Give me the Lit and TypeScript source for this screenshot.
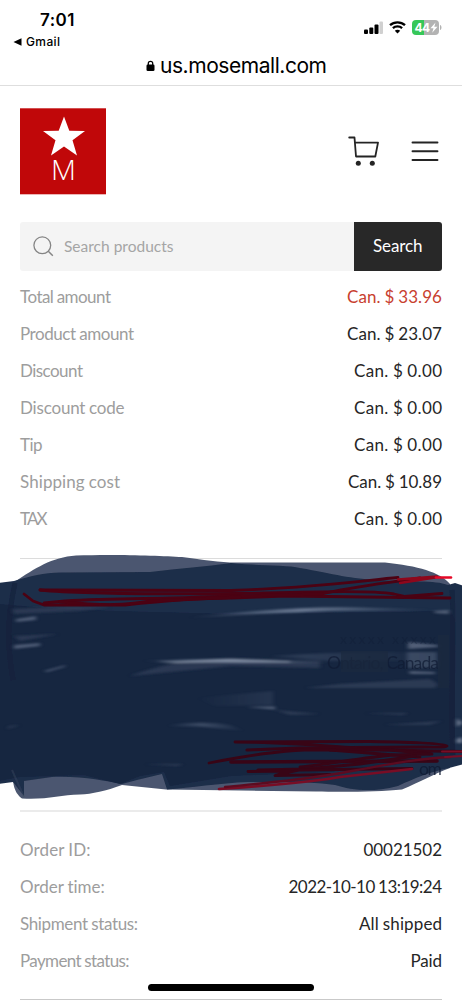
import { LitElement, html, css, svg } from "lit";
import { customElement, property } from "lit/decorators.js";

/** Text tracked so that it fills a given width exactly. */
@customElement("fit-text")
class FitText extends LitElement {
  @property({ type: String }) text = "";
  @property({ type: Number }) size = 0;

  static styles = css`
    :host { display: inline-block; white-space: pre; }
    .t { display: inline-block; white-space: pre; }
  `;

  render() {
    return html`<span class="t">${this.text}</span>`;
  }

  updated() {
    const el = this.renderRoot.querySelector(".t") as HTMLElement;
    if (!this.size || !el) return;
    el.style.letterSpacing = "0px";
    const gap = (this.size - el.getBoundingClientRect().width) / Math.max(1, this.text.length - 1);
    el.style.letterSpacing = `${gap.toFixed(3)}px`;
    el.style.marginRight = `${(-gap).toFixed(3)}px`;
  }
}

type Row = { label: string; lw: number; value: string; vw: number; hot?: boolean };

const amounts: Row[] = [
  { label: "Total amount", lw: 91, value: "Can. $ 33.96", vw: 95, hot: true },
  { label: "Product amount", lw: 114, value: "Can. $ 23.07", vw: 95 },
  { label: "Discount", lw: 63, value: "Can. $ 0.00", vw: 88 },
  { label: "Discount code", lw: 104.5, value: "Can. $ 0.00", vw: 88 },
  { label: "Tip", lw: 22.5, value: "Can. $ 0.00", vw: 88 },
  { label: "Shipping cost", lw: 100, value: "Can. $ 10.89", vw: 94 },
  { label: "TAX", lw: 27.5, value: "Can. $ 0.00", vw: 88 },
];

const order: Row[] = [
  { label: "Order ID:", lw: 70.5, value: "00021502", vw: 78.5 },
  { label: "Order time:", lw: 85, value: "2022-10-10 13:19:24", vw: 153.5 },
  { label: "Shipment status:", lw: 118, value: "All shipped", vw: 83 },
  { label: "Payment status:", lw: 109.5, value: "Paid", vw: 31.5 },
];

const scribble = svg`
  <defs>
    <filter id="soft" x="-5%" y="-5%" width="110%" height="110%"><feGaussianBlur stdDeviation="0.7"/></filter>
    <filter id="haze" x="-20%" y="-80%" width="140%" height="260%"><feGaussianBlur stdDeviation="2.2 0.9"/></filter>
    <linearGradient id="fade" x1="0" x2="1"><stop offset="0" stop-color="#8290a8" stop-opacity="0"/><stop offset=".45" stop-color="#8290a8"/><stop offset="1" stop-color="#8290a8" stop-opacity="0"/></linearGradient>
  </defs>
  <g filter="url(#soft)">
    <path fill="#4c576f" d="M16 581C34 569 52 557 76 555.500C110 554 160 555.500 182 557C205 560 222 563 240 562.500L385 562.500C418 566 440 572 450 584L452 640L450 768C434 774 420 782 402 789.500C380 792 340 792 316 791.500L166 789.500L122 785C106 791 92 794 80 794.500C60 795 46 800 22 798.500C15 793 13 787 12 770Z"/>
    <path fill="#1d2d49" d="M-2 583L14 581C30 576 44 573 60 572.500L150 572C180 568 205 567 231 563C260 566 288 565 300 568C335 574 350 579 380 580C410 582 435 580 448 585L455 583L464 586V764L449 768C430 772 415 778 398 786C370 793 352 790 335 785C310 781 275 782 248 782C220 783 190 788 167 789.500L162 774L137 780L122 784C104 781 84 776 52 777L24 781L24 796L13 782L-2 784Z"/>
    <path fill="#172640" d="M-2 604L22 606C80 611 160 612 231 614L450 611L455 620V755L400 764L330 772L231 776L170 786L164 772L140 776L120 784L84 775L20 777L-2 781Z"/>
    <path fill="none" stroke="#3c4a63" stroke-width="2" d="M12 770L24 797" opacity=".4"/>
    <path fill="none" stroke="#10203b" stroke-width="5" d="M15 583C7 620 7 645 13 680M452 590C455 640 450 710 453 755" opacity=".6"/>
  </g>
  <g filter="url(#haze)">
    <path fill="#56637c" opacity=".85" d="M16 619L36 616V620L16 622ZM14 645L40 643V646L14 649ZM44 671L66 665L64 667L47 672Z"/>
    <path fill="#35435c" opacity=".65" d="M12 609L70 606L110 607L80 611L14 614ZM14 636L58 634L20 641ZM130 676C170 661 210 658 231 658L320 661V668L231 666Z"/>
    <path fill="#a3adbd" opacity=".6" d="M156 661.500L231 658.800L290 661V662.500L231 662L175 663Z"/>
    <path fill="url(#fade)" opacity=".6" d="M140 661C180 659 220 658.500 280 661L340 663L245 663L165 662Z"/>
    <path fill="url(#fade)" opacity=".75" d="M184 618C250 611 310 605 374 608L440 610L330 611L260 614Z"/>
    <path fill="url(#fade)" opacity=".2" d="M270 656C340 652 400 650 445 655V661H330ZM195 698L273 691V705L215 706Z"/>
    <path fill="url(#fade)" opacity=".35" d="M165 726C190 722 210 722 230 725L245 731L200 726.500Z"/>
    <path fill="#66728a" opacity=".75" d="M247 707L275 706.500V709.500ZM434 611L449 610V614L435 613ZM408 642L438 645V647L408 649ZM409 671L435 672V674L410 674Z"/>
    <path fill="#46536b" opacity=".45" d="M275 710L320 714L290 715ZM365 713L408 713L403 715ZM384 725L442 721L429 725ZM145 764L183 764L178 766ZM9 726L20 725L7 729ZM305 688L340 684L430 679L438 684L435 688Z"/>
    <path fill="#7b869b" d="M457 718L462 723L457 727ZM457 739L462 737V743H457Z"/>
    <path fill="#5a677f" opacity=".5" d="M407 652H437V668H407Z"/>
  </g>
  <g fill="#101b33" font-family="Lato, sans-serif" font-size="17.5">
    <text x="340" y="644" opacity=".3" font-size="14" textLength="96">xxxxx xxxxx</text>
    <text x="327" y="668.500" opacity=".72" textLength="112">Ontario, Canada</text>
    <text x="419" y="774.500" opacity=".8" textLength="23">om</text>
  </g>
  <g filter="url(#soft)">
    <path fill="#172640" opacity=".7" d="M341 651H388V672H341ZM438 635H449V688H438Z"/>
  </g>
  <g fill="none" stroke="#4b0213" stroke-width="2.800" stroke-linecap="round" stroke-linejoin="round">
    <path d="M40 590L231 590.500C310 588 360 581 398 577.500"/>
    <path d="M40 590C80 594 180 594 240 593.500C310 592 370 590 394 594L408 597"/>
    <path d="M24 594L33 601L44 605L125 605C170 600 205 598 231 598L285 596L450 598"/>
    <path d="M44 603L65 601C115 598 165 599 200 597L322 594C350 587 380 584 420 578"/>
    <path d="M60 602C110 606 125 605 150 601L240 597"/>
    <path d="M398 597L442 593.500"/>
    <g stroke="#380516">
      <path d="M235 742L370 741.500C400 742 446 743 447 746C446 748 435 747 425 747L350 747.500C310 745 280 742 236 742"/>
      <path stroke-width="3.200" d="M247 750L300 748L345 748C380 750 400 751 462 751.500"/>
      <path d="M209 763C245 756 275 751 304 750L390 750L432 754"/>
      <path stroke-width="3.600" d="M231 762L330 761.500L437 761"/>
      <path d="M300 767C330 764 365 757 395 755L430 754M330 750L420 757"/>
      <path stroke-width="3.200" d="M258 770L305 769L360 764L415 756"/>
      <path d="M248 771.500L290 771L275 775.500L330 774.500M276 775L300 770L412 768.500"/>
    </g>
  </g>
  <g fill="none" stroke-linecap="round">
    <path stroke="#8e071c" stroke-width="2.400" d="M398 579.500L437 576.500M400 583L435 577.500"/>
    <path stroke="#e60927" stroke-width="2.600" d="M436 577.500L451 577.500"/>
    <path stroke="#780d25" stroke-width="2.700" d="M219 789C265 786 305 783 340 777L412 769"/>
    <path stroke="#5c0b20" stroke-width="2.400" d="M225 787C275 782 300 780 335 774C385 765 420 758 450 757"/>
    <path stroke="#780d25" stroke-width="2" d="M442 751.500H463M445 757L463 756"/>
  </g>
`;

@customElement("app-root")
class AppRoot extends LitElement {
  static styles = css`
    :host { display: block; width: 462px; height: 1000px; overflow: hidden; background: #fff; font-family: Lato, "Open Sans", sans-serif; color: #262626; }
    * { box-sizing: border-box; }
    svg { display: block; }
    .page { position: relative; display: flex; flex-direction: column; height: 1000px; }
    .browser { height: 86px; border-bottom: 1px solid #dedede; font-family: Inter, sans-serif; color: #000; display: flex; flex-direction: column; }
    .status { height: 52px; display: flex; justify-content: space-between; padding: 9px 20px 0 13px; }
    .clock { font-size: 17px; font-weight: 600; line-height: 22px; padding-left: 27px; }
    .back { display: flex; align-items: center; gap: 4px; font-size: 12px; font-weight: 500; line-height: 18px; margin-top: 2px; }
    .signals { display: flex; gap: 6px; padding-top: 11px; height: 30px; }
    .address { display: flex; justify-content: center; align-items: center; gap: 5px; font-size: 21px; line-height: 28px; padding-left: 11px; }
    .header { height: 135.500px; padding: 22px 23px 0 20px; display: flex; justify-content: space-between; }
    .tools { display: flex; gap: 32px; padding-top: 28px; }
    .search { display: flex; height: 49px; margin: 0 20px; border-radius: 3px; overflow: hidden; }
    .field { flex: 1; background: #f4f4f4; display: flex; align-items: center; gap: 10px; padding-left: 13px; font-size: 15.500px; color: #a5a5a5; }
    .go { width: 88.500px; background: #282828; color: #fff; font-size: 17px; display: flex; align-items: center; justify-content: center; padding-bottom: 2px; }
    .rows { padding: 0 20px; }
    .amounts { margin-top: 7.500px; }
    .order { margin-top: 18.500px; }
    .row { height: 37px; display: flex; align-items: center; justify-content: space-between; font-size: 17px; word-spacing: -0.500px; }
    .label { color: #9d9d9d; }
    .hot { color: #c8402f; }
    .rule { flex: none; height: 1px; background: #dcdcdc; margin: 0 20px; }
    .first { margin-top: 21px; }
    .second { height: 2px; background: #ebebeb; }
    .hidden { flex: none; height: 251px; }
    .scribble { margin-top: -11px; }
    .last { margin-top: 20px; background: #c9c9c9; }
    .home { position: absolute; left: 148px; top: 984px; width: 166px; height: 6.500px; border-radius: 4px; background: #000; }
  `;

  row(r: Row) {
    return html`<div class="row">
      <fit-text class="label" .text=${r.label} .size=${r.lw}></fit-text>
      <fit-text class=${r.hot ? "hot" : "value"} .text=${r.value} .size=${r.vw}></fit-text>
    </div>`;
  }

  render() {
    return html`<div class="page">
      <div class="browser">
        <div class="status">
          <div>
            <div class="clock"><fit-text .text=${"7:01"} .size=${34.5}></fit-text></div>
            <div class="back">
              <svg width="9" height="8" viewBox="0 0 9 8"><path d="M.5 4L8.500.3V7.700Z"/></svg>
              <fit-text .text=${"Gmail"} .size=${34}></fit-text>
            </div>
          </div>
          <div class="signals">
            <svg width="21" height="14" viewBox="0 0 21 14"><rect x="2" y="9.500" width="4" height="4.500" rx="1"/><rect x="7.300" y="7.500" width="4" height="6.500" rx="1"/><rect x="12.500" y="4.500" width="4" height="9.500" rx="1"/><rect x="17.500" y="1.500" width="3.500" height="12.500" rx="1" fill="#d0d0d0"/></svg>
            <svg width="17" height="14" viewBox="0 0 17 14"><path d="M1 5.200C5.200 1.300 11.800 1.300 16 5.200M3.900 8.100C6.500 5.700 10.500 5.700 13.100 8.100" fill="none" stroke="#000" stroke-width="2.300"/><path d="M8.500 13.600L5.800 10.700C7.300 9.300 9.700 9.300 11.200 10.700Z"/></svg>
            <svg width="30" height="16" viewBox="0 0 30 16"><path d="M4 0H12V15H4A4 4 0 0 1 0 11V4A4 4 0 0 1 4 0Z" fill="#36c759"/><path d="M12 0H23A4 4 0 0 1 27 4V11A4 4 0 0 1 23 15H12Z" fill="#b3b3b3"/><path d="M28 5C30 5.500 30 9.500 28 10Z" fill="#b3b3b3"/><text x="2.500" y="11.700" font-family="Inter, sans-serif" font-size="12" font-weight="700" fill="#fff" textLength="15.500">44</text><path d="M23.500 2.500L18.500 8.300H21.500L20.200 12.700L25.500 6.800H22.300Z" fill="#fff"/></svg>
          </div>
        </div>
        <div class="address">
          <svg width="9" height="12" viewBox="0 0 9 12"><rect x=".5" y="4.500" width="8" height="6.500" rx="1.300"/><path d="M2.300 5V3.300C2.300.6 6.700.6 6.700 3.300V5" fill="none" stroke="#000" stroke-width="1.300"/></svg>
          <fit-text .text=${"us.mosemall.com"} .size=${167}></fit-text>
        </div>
      </div>
      <div class="header">
        <svg width="86" height="87" viewBox="0 0 86 87">
          <rect y=".3" width="86" height="86" fill="#c00709"/>
          <path fill="#fff" d="M44 8.500L49.300 22.700L65 23L52.500 32.300L57 47.500L44 38.500L31 47.500L35.500 32.300L23 23L38.700 22.700Z"/>
          <text x="31" y="72.200" font-family="Open Sans, sans-serif" font-weight="300" font-size="28" fill="#fff" textLength="25" lengthAdjust="spacingAndGlyphs">M</text>
        </svg>
        <div class="tools">
          <svg width="31" height="32" viewBox="0 0 31 32"><path d="M1.200 1.500H6.500L8 20.500H27.300L30 6.700H7" fill="none" stroke="#242424" stroke-width="1.800" stroke-linejoin="round" stroke-linecap="round"/><circle cx="10.300" cy="27.200" r="2.500" fill="#242424"/><circle cx="24.300" cy="27.200" r="2.500" fill="#242424"/></svg>
          <svg width="28" height="32" viewBox="0 0 28 32"><path d="M1.500 6.500H26.500M1.500 15.300H26.500M1.500 24H26.500" stroke="#242424" stroke-width="1.900" stroke-linecap="round"/></svg>
        </div>
      </div>
      <div class="search">
        <div class="field">
          <svg width="21" height="21" viewBox="0 0 21 21"><circle cx="9.300" cy="9.300" r="8.400" fill="none" stroke="#858585" stroke-width="1.300"/><path d="M15.300 15.300L19.800 19.800" stroke="#858585" stroke-width="1.400"/></svg>
          <fit-text .text=${"Search products"} .size=${109.5}></fit-text>
        </div>
        <div class="go"><fit-text .text=${"Search"} .size=${49.5}></fit-text></div>
      </div>
      <div class="rows amounts">${amounts.map((r) => this.row(r))}</div>
      <div class="rule first"></div>
      <div class="hidden"><svg class="scribble" width="462" height="256" viewBox="0 548 462 256">${scribble}</svg></div>
      <div class="rule second"></div>
      <div class="rows order">${order.map((r) => this.row(r))}</div>
      <div class="rule last"></div>
      <div class="home"></div>
    </div>`;
  }
}
